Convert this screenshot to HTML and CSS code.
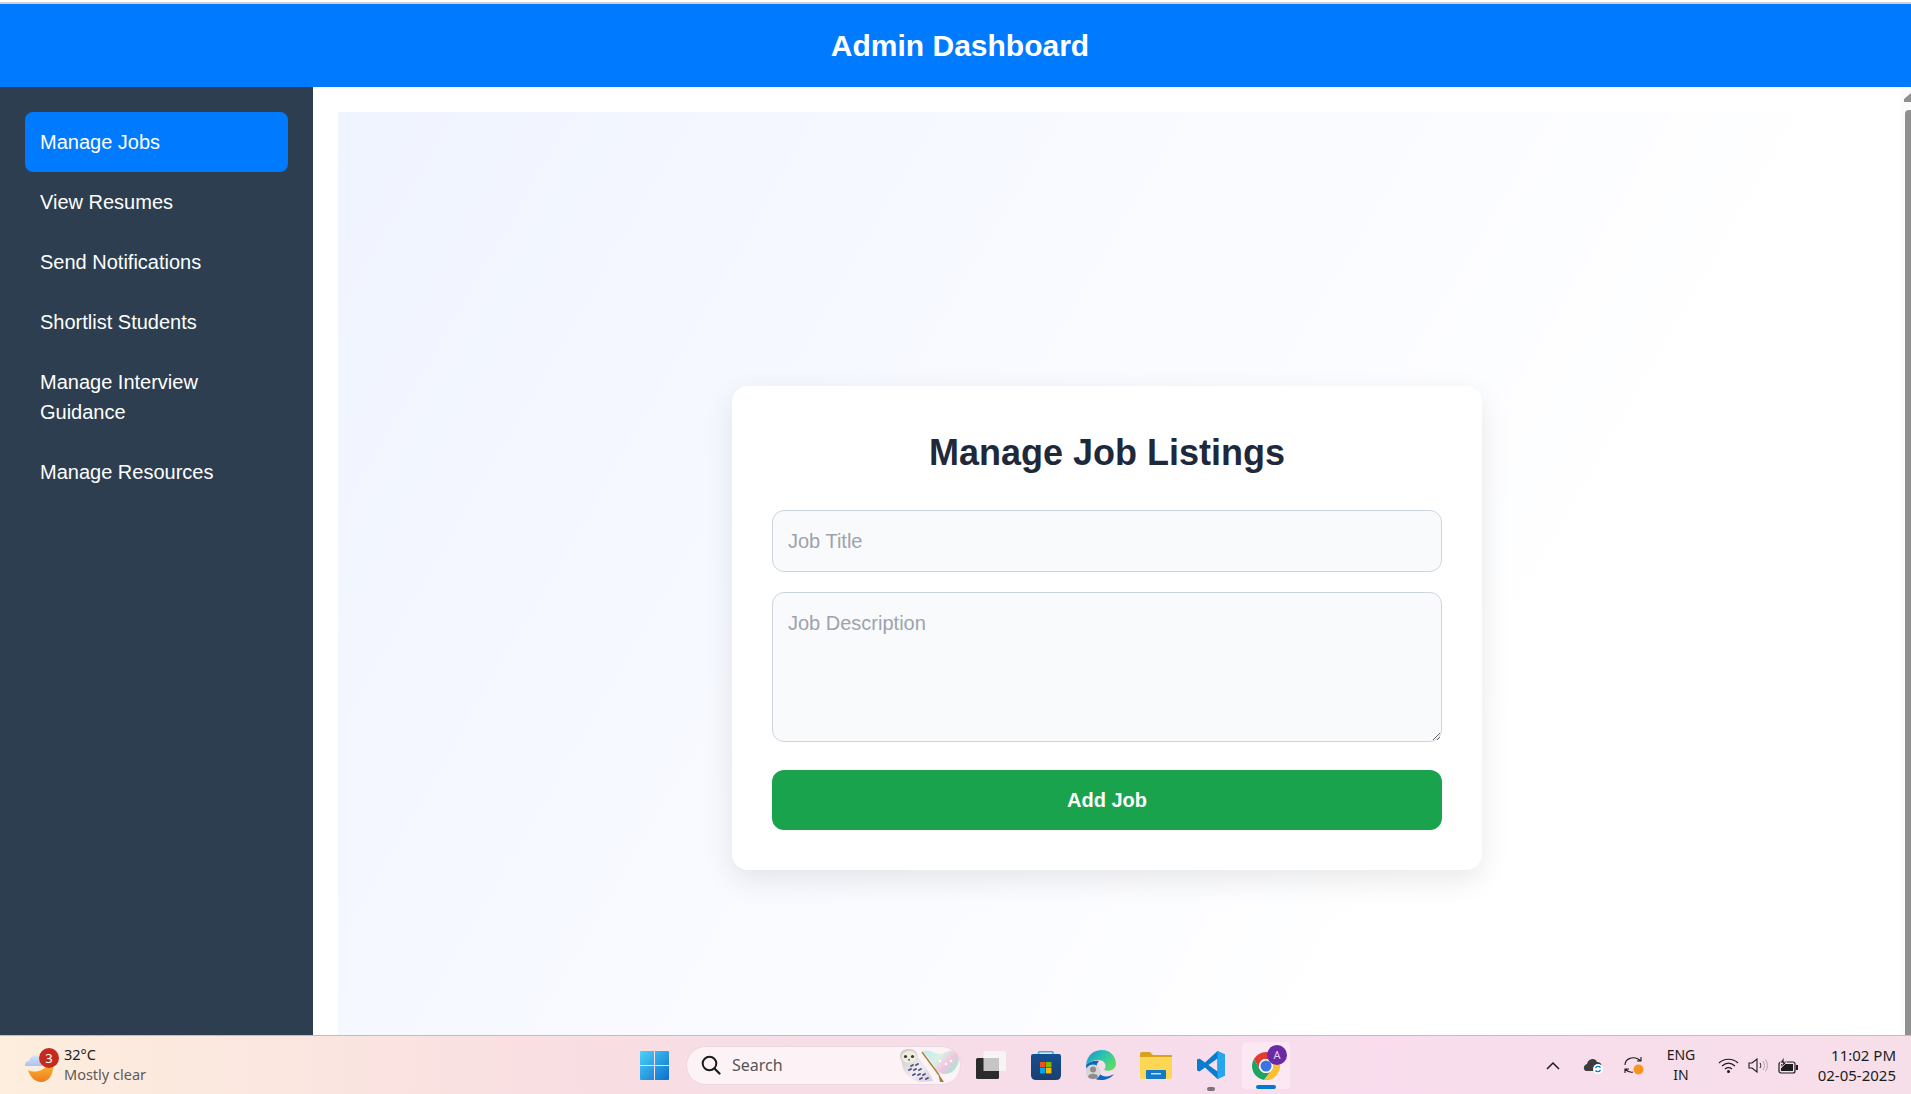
FILE: index.html
```html
<!DOCTYPE html>
<html lang="en">

<head>
    <meta charset="UTF-8">
    <meta name="viewport" content="width=device-width, initial-scale=1.0">
    <title>Admin Dashboard</title>
    <link rel="stylesheet" href="styles.css">
</head>

<body>
    <div class="screen">
        <div class="browser">
            <header class="topbar">
                <h1>Admin Dashboard</h1>
            </header>
            <div class="body-row">
                <nav class="sidebar">
                    <a href="#" class="nav-link active">Manage Jobs</a>
                    <a href="#" class="nav-link">View Resumes</a>
                    <a href="#" class="nav-link">Send Notifications</a>
                    <a href="#" class="nav-link">Shortlist Students</a>
                    <a href="#" class="nav-link">Manage Interview Guidance</a>
                    <a href="#" class="nav-link">Manage Resources</a>
                </nav>
                <main class="main">
                    <section class="panel">
                        <form class="card">
                            <h2>Manage Job Listings</h2>
                            <input class="field" type="text" placeholder="Job Title">
                            <textarea class="field area" placeholder="Job Description"></textarea>
                            <button class="add-btn" type="button">Add Job</button>
                        </form>
                    </section>
                </main>
                <div class="scrollbar">
                    <svg class="scroll-arrow" width="7" height="9" viewBox="0 0 7 9">
                        <path d="M0 9 L0 6 L7 0 L7 9 Z" fill="#8f8f8f" />
                    </svg>
                    <div class="scroll-thumb"></div>
                </div>
            </div>
        </div>

        <footer class="taskbar">
            <div class="tb-left">
                <div class="weather-icon">
                    <svg width="30" height="34" viewBox="0 0 30 34">
                        <defs>
                            <linearGradient id="moon" x1="0" y1="0" x2="0" y2="1">
                                <stop offset="0" stop-color="#f9b52f" />
                                <stop offset="1" stop-color="#ee7d1e" />
                            </linearGradient>
                            <linearGradient id="cloud" x1="0" y1="0" x2="0" y2="1">
                                <stop offset="0" stop-color="#d6e2f6" />
                                <stop offset="1" stop-color="#a9c3f0" />
                            </linearGradient>
                        </defs>
                        <path d="M3 22 C8 25 18 24 22 17 L28 16 C29 26 24 34 16 34 C10 34 5 29 3 22 Z" fill="url(#moon)" />
                        <path d="M0 18 C0 14 2 13 4 13 C5 7 13 5 15 10 C17 11 18 14 17 18 Z" fill="url(#cloud)" />
                    </svg>
                    <span class="weather-badge">3</span>
                </div>
                <div class="weather-text">
                    <span class="temp">32°C</span>
                    <span class="cond">Mostly clear</span>
                </div>
            </div>

            <div class="tb-center">
                <svg class="tb-win" width="29" height="29" viewBox="0 0 29 29">
                    <defs>
                        <linearGradient id="win" x1="0" y1="0" x2="1" y2="1">
                            <stop offset="0" stop-color="#4fd2f8" />
                            <stop offset="1" stop-color="#0a6fcf" />
                        </linearGradient>
                    </defs>
                    <path d="M1 0 H14 V14 H0 V1 Q0 0 1 0 Z M15 0 H28 Q29 0 29 1 V14 H15 Z M0 15 H14 V29 H1 Q0 29 0 28 Z M15 15 H29 V28 Q29 29 28 29 H15 Z" fill="url(#win)" />
                </svg>

                <div class="search">
                    <svg width="20" height="20" viewBox="0 0 20 20">
                        <circle cx="8.500" cy="8.500" r="6.800" fill="none" stroke="#1b1b1b" stroke-width="2" />
                        <path d="M13.500 13.500 L18.500 18.500" stroke="#1b1b1b" stroke-width="2.200" stroke-linecap="round" />
                    </svg>
                    <span class="search-label">Search</span>
                    <svg class="search-art" width="61" height="34" viewBox="0 0 61 34">
                        <defs>
                            <linearGradient id="feather" x1="0" y1="0" x2="1" y2="0.600">
                                <stop offset="0" stop-color="#bfeaf3" />
                                <stop offset="0.450" stop-color="#d8f1e6" />
                                <stop offset="0.750" stop-color="#f4c3df" />
                                <stop offset="1" stop-color="#a7e6d6" />
                            </linearGradient>
                            <linearGradient id="owl" x1="0" y1="0" x2="1" y2="1">
                                <stop offset="0" stop-color="#c9c6b6" />
                                <stop offset="0.600" stop-color="#efedf0" />
                                <stop offset="1" stop-color="#cfcbd8" />
                            </linearGradient>
                        </defs>
                        <path d="M24 3 C30 1 36 6 42 6 C46 5 50 1 55 3 C60 5 61 12 58 18 C55 24 50 26 46 26 C42 26 38 24 36 20 C33 14 28 8 24 3 Z" fill="url(#feather)" />
                        <circle cx="41" cy="13" r="1.300" fill="#fff" />
                        <circle cx="47" cy="16" r="1.300" fill="#fff" />
                        <circle cx="52" cy="13" r="1.300" fill="#fff" />
                        <path d="M23 4 L40 27" stroke="#a08236" stroke-width="1.400" />
                        <path d="M39 25 L45 34 L41 34 Z" fill="#a08236" />
                        <path d="M1 9 C1 3 5 1 10 1 C15 1 19 3 19 10 C25 15 31 25 34 33 L21 34 C10 31 3 23 3 15 Z" fill="url(#owl)" />
                        <ellipse cx="10" cy="9" rx="7.500" ry="6" fill="#efece2" />
                        <circle cx="6.500" cy="8.500" r="1.600" fill="#3a3a34" />
                        <circle cx="13.500" cy="8.500" r="1.600" fill="#3a3a34" />
                        <path d="M9 11 L11 11 L10 13.500 Z" fill="#55524a" />
                        <path d="M12 18 L14 17 M17 17 L19 16 M10 22 L12 21 M15 22 L17 21 M20 22 L22 21 M14 27 L16 26 M19 27 L21 26 M24 27 L26 26 M21 31 L23 30 M27 31 L29 30" stroke="#4e4a86" stroke-width="1.800" stroke-linecap="round" />
                    </svg>
                </div>

                <svg class="tb-icon" width="30" height="28" viewBox="0 0 30 28">
                    <rect x="7.500" y="0" width="22.500" height="20" rx="1.500" fill="#f7f4f5" />
                    <rect x="0" y="7" width="23" height="21" rx="1.500" fill="#2b2b2b" />
                    <rect x="7.500" y="7" width="15.500" height="13" fill="#c6c4c5" />
                </svg>

                <svg class="tb-icon" width="30" height="29" viewBox="0 0 30 29">
                    <defs>
                        <linearGradient id="store" x1="0" y1="0" x2="0" y2="1">
                            <stop offset="0" stop-color="#14508f" />
                            <stop offset="1" stop-color="#1b3f70" />
                        </linearGradient>
                    </defs>
                    <path d="M7.500 5 V1.500 Q7.500 0.800 8.500 0.800 H21 Q22 0.800 22 1.500 V5" fill="none" stroke="#28b4f0" stroke-width="1.600" />
                    <path d="M0 5 Q0 3 2 3 H28 Q30 3 30 5 V24 Q30 29 25 29 H5 Q0 29 0 24 Z" fill="url(#store)" />
                    <rect x="9" y="11" width="5.400" height="5.400" fill="#f25022" />
                    <rect x="15" y="11" width="5.400" height="5.400" fill="#7fba00" />
                    <rect x="9" y="17" width="5.400" height="5.400" fill="#00a4ef" />
                    <rect x="15" y="17" width="5.400" height="5.400" fill="#ffb900" />
                </svg>

                <svg class="tb-icon edge-icon" width="30" height="30" viewBox="0 0 30 30">
                    <defs>
                        <linearGradient id="edge" x1="0" y1="0" x2="1" y2="0.700">
                            <stop offset="0" stop-color="#1a8fd0" />
                            <stop offset="0.500" stop-color="#2cc3b0" />
                            <stop offset="1" stop-color="#5fdc64" />
                        </linearGradient>
                    </defs>
                    <path d="M0 15 C1 5 8 0 16 0 C24 0 30 6 30 14 C30 20 23 22 18 20 C22 15 18 10 12 10 C7 10 3 12 0 15 Z" fill="url(#edge)" />
                    <path d="M0 15 C3 12 8 10 13 11 C10 14 10 18 12 22 C15 27 22 28 28 24 C25 28 20 30 15 30 C6 30 0 23 0 15 Z" fill="#0f68c0" />
                    <circle cx="7" cy="22" r="7.500" fill="#d8d5d6" />
                    <circle cx="7" cy="19.500" r="3" fill="#8d8b8c" />
                    <path d="M2 27 C2 22.500 12 22.500 12 27 C10 29.500 4 29.500 2 27 Z" fill="#8d8b8c" />
                </svg>

                <svg class="tb-icon explorer-icon" width="32" height="27" viewBox="0 0 32 27">
                    <path d="M0 2 Q0 0 2 0 H10 L13 3 H32 V8 H0 Z" fill="#d9a21b" />
                    <path d="M0 5 H32 V25 Q32 27 30 27 H2 Q0 27 0 25 Z" fill="#fcd655" />
                    <rect x="6" y="18" width="20" height="9" rx="1" fill="#1579c9" />
                    <rect x="11" y="21" width="10" height="1.500" fill="#bfe0f7" />
                </svg>

                <svg class="tb-icon vscode-icon" width="30" height="30" viewBox="0 0 30 30">
                    <path fill-rule="evenodd" d="M21.500 1 L29 4.500 V25.500 L21.500 29 L9 17.500 L3.500 21.500 L1 20.500 V9.500 L3.500 8.500 L9 12.500 Z M21.500 8.500 L12.500 15 L21.500 21.500 Z" fill="#0b7ccb" />
                    <path d="M21.500 1 L29 4.500 V25.500 L21.500 29 Z" fill="#26a6ee" />
                </svg>

                <div class="chrome-tile">
                    <svg width="30" height="30" viewBox="0 0 30 30">
                        <path d="M2.900 8 A14 14 0 0 1 27.100 8 H15 A7 7 0 0 0 8.900 18.500 Z" fill="#e23c2e" />
                        <path d="M2.900 8 A14 14 0 0 0 13 28.900 L21.100 18.500 A7 7 0 0 1 8.900 18.500 Z" fill="#1ea362" />
                        <path d="M27.100 8 A14 14 0 0 1 13 28.900 L21.100 18.500 A7 7 0 0 0 15 8 Z" fill="#fbc02d" />
                        <circle cx="15" cy="15" r="7" fill="#f8f8f8" />
                        <circle cx="15" cy="15" r="5.500" fill="#3a74e0" />
                    </svg>
                    <span class="chrome-badge">A</span>
                    <span class="chrome-line"></span>
                </div>
                <span class="vscode-dot"></span>
            </div>

            <div class="tb-right">
                <svg class="tray-chev" width="14" height="9" viewBox="0 0 14 9">
                    <path d="M1 8 L7 2 L13 8" fill="none" stroke="#1c1c1c" stroke-width="1.500" />
                </svg>
                <svg class="tray-cloud" width="21" height="17" viewBox="0 0 21 17">
                    <path d="M3 14 C0 13 0 8 4 7 C5 2 12 0 14 5 C18 5 19 8 18 9 L10 14 Z" fill="#3d3d3d" />
                    <circle cx="15" cy="12" r="5" fill="#fff" />
                    <path d="M12.500 11 A3 3 0 0 1 17.500 10.500 M17.500 13 A3 3 0 0 1 12.500 13.500" fill="none" stroke="#0a78d7" stroke-width="1.400" />
                </svg>
                <svg class="tray-sync" width="21" height="19" viewBox="0 0 21 19">
                    <path d="M2 9 C2 3 9 0 15 3 L18 5 M18 1 V5 H14" fill="none" stroke="#1c1c1c" stroke-width="1.100" />
                    <path d="M10 16 C6 17 4 15 2 13 M2 17 V13 H6" fill="none" stroke="#1c1c1c" stroke-width="1.100" />
                    <circle cx="15.500" cy="13.500" r="5" fill="#f7931e" />
                </svg>
                <div class="tray-lang">
                    <span>ENG</span>
                    <span>IN</span>
                </div>
                <svg class="tray-wifi" width="21" height="15" viewBox="0 0 21 15">
                    <path d="M1 5 C6 0 15 0 20 5 M4 8 C8 4.500 13 4.500 17 8 M7 11 C9 9.500 12 9.500 14 11" fill="none" stroke="#1c1c1c" stroke-width="1.200" />
                    <circle cx="10.500" cy="13.500" r="1.500" fill="#1c1c1c" />
                </svg>
                <svg class="tray-vol" width="20" height="15" viewBox="0 0 20 15">
                    <path d="M1 5 H4 L9 1 V14 L4 10 H1 Z" fill="none" stroke="#1c1c1c" stroke-width="1.100" />
                    <path d="M12 5 C13 6.500 13 8.500 12 10" fill="none" stroke="#1c1c1c" stroke-width="1" />
                    <path d="M15 3 C17 6 17 9 15 12 M17.500 1.500 C20 5.500 20 9.500 17.500 13.500" fill="none" stroke="#b0a8ac" stroke-width="1" />
                </svg>
                <svg class="tray-batt" width="21" height="17" viewBox="0 0 21 17">
                    <rect x="1" y="5" width="16" height="11" rx="2" fill="none" stroke="#1c1c1c" stroke-width="1.200" />
                    <rect x="3" y="7" width="12" height="7" fill="#1c1c1c" />
                    <rect x="18" y="8" width="2" height="5" fill="#1c1c1c" />
                    <path d="M6 0 L2 6 H5 L3 11 L9 5 H6 Z" fill="#1c1c1c" stroke="#f6deea" stroke-width="0.800" />
                </svg>
                <div class="tray-clock">
                    <span>11:02 PM</span>
                    <span>02-05-2025</span>
                </div>
            </div>
        </footer>
    </div>
</body>

</html>
```

FILE: styles.css
```css
/**** DEFAULTS ****/

* {
    padding: 0;
    margin: 0;
    box-sizing: border-box;
}

html,
body {
    height: 100%;
    overflow: hidden;
}

body {
    font-family: "Liberation Sans", Arial, sans-serif;
    font-size: 20px;
    line-height: 1.5;
}

/**** PAGE ****/

.screen {
    display: flex;
    flex-direction: column;
    height: 1094px;
    background: #fff;
}

.browser {
    flex: 1;
    min-height: 0;
    display: flex;
    flex-direction: column;
    padding-top: 2px;
}

.topbar {
    height: 85px;
    flex-shrink: 0;
    padding-left: 9px;
    border-top: 2px solid #d0d0d0;
    background-color: #007bff;
    color: #fff;
    display: flex;
    align-items: center;
    justify-content: center;
}

.topbar h1 {
    font-size: 30px;
    font-weight: 700;
}

.body-row {
    flex: 1;
    min-height: 0;
    display: flex;
}

/**** SIDEBAR ****/

.sidebar {
    width: 313px;
    flex-shrink: 0;
    padding: 25px;
    background-color: #2c3e50;
}

.nav-link {
    display: block;
    padding: 15px;
    color: #fff;
    text-decoration: none;
    border-radius: 8px;
}

.nav-link.active {
    background-color: #007bff;
}

/**** MAIN ****/

.main {
    flex: 1;
    min-width: 0;
    padding: 25px 25px 0;
    overflow: hidden;
}

.panel {
    height: 1032px;
    display: flex;
    align-items: center;
    justify-content: center;
    background: linear-gradient(120deg, #f0f4ff, #ffffff 72%);
}

.card {
    width: 750px;
    padding: 40px;
    border-radius: 16px;
    background-color: #fff;
    box-shadow: 0 10px 30px rgba(0, 0, 0, 0.09);
}

.card h2 {
    margin-bottom: 30px;
    font-size: 36px;
    font-weight: 700;
    text-align: center;
    color: #1e293b;
}

.field {
    display: block;
    width: 100%;
    height: 62px;
    margin-bottom: 20px;
    padding: 15px;
    font-family: inherit;
    font-size: 20px;
    line-height: 1.5;
    color: #1e293b;
    background-color: #f9fafb;
    border: 1px solid #cbd5e1;
    border-radius: 12px;
}

.field::placeholder {
    color: #9ca3af;
}

.area {
    height: 150px;
    margin-bottom: 28px;
    resize: vertical;
}

.add-btn {
    display: block;
    width: 100%;
    height: 60px;
    font-family: inherit;
    font-size: 20px;
    font-weight: 700;
    color: #fff;
    background-color: #1aa34d;
    border: none;
    border-radius: 12px;
}

/**** SCROLLBAR ****/

.scrollbar {
    width: 10px;
    flex-shrink: 0;
    display: flex;
    flex-direction: column;
    align-items: flex-end;
    padding-top: 6px;
    background-color: #fbfbfb;
}

.scroll-arrow {
    display: block;
    margin-bottom: 8px;
}

.scroll-thumb {
    flex: 1;
    width: 6px;
    border-radius: 4px 0 0 0;
    background-color: #8f8f8f;
}

/**** TASKBAR ****/

.taskbar {
    height: 59px;
    flex-shrink: 0;
    display: flex;
    align-items: center;
    border-top: 1px solid #c9b8bd;
    background: linear-gradient(90deg, #fdeedd 0%, #f9dfe2 28%, #f6dde8 50%, #f9ddee 72%, #f7dfe9 100%);
    font-family: "Noto Sans", sans-serif;
    font-size: 14px;
    line-height: 20px;
    color: #1c1c1c;
}

.tb-left {
    width: 640px;
    flex-shrink: 0;
    display: flex;
    align-items: center;
    padding-left: 25px;
}

.weather-icon {
    position: relative;
    width: 30px;
    height: 34px;
    margin-right: 9px;
}

.weather-icon svg {
    display: block;
}

.weather-badge {
    position: absolute;
    top: 0;
    left: 14px;
    width: 20px;
    height: 20px;
    border-radius: 50%;
    background-color: #c42b1c;
    color: #fff;
    font-size: 13px;
    text-align: center;
}

.weather-text {
    display: flex;
    flex-direction: column;
    margin-top: -2px;
    font-size: 14.5px;
}

.cond {
    color: #5f5a58;
}

.tb-center {
    position: relative;
    width: 650px;
    flex-shrink: 0;
    display: flex;
    align-items: center;
}

.tb-win {
    display: block;
    margin-right: 17px;
}

.search {
    width: 275px;
    height: 39px;
    margin-right: 15px;
    padding-left: 14px;
    display: flex;
    align-items: center;
    border: 1px solid #ecd8e0;
    border-radius: 20px;
    background-color: #fdf2f6;
    font-size: 16px;
    color: #555;
}

.search-label {
    margin-left: 11px;
}

.search-art {
    margin-left: auto;
}

.tb-icon {
    display: block;
    margin-right: 25px;
}

.edge-icon,
.explorer-icon {
    margin-right: 24px;
}

.vscode-icon {
    margin-right: 16px;
}

.chrome-tile {
    position: relative;
    width: 48px;
    height: 47px;
    padding: 9px 0 0 9px;
    border-radius: 4px;
    background-color: #fbe8f2;
}

.chrome-tile svg {
    display: block;
}

.chrome-badge {
    position: absolute;
    top: 3px;
    left: 25px;
    width: 20px;
    height: 20px;
    border-radius: 50%;
    background-color: #6a2aa5;
    color: #e4cdf5;
    font-size: 11px;
    line-height: 20px;
    text-align: center;
}

.chrome-line {
    position: absolute;
    bottom: 0;
    left: 14px;
    width: 20px;
    height: 4px;
    border-radius: 2px;
    background-color: #0078d4;
}

.vscode-dot {
    position: absolute;
    left: 567px;
    bottom: -2px;
    width: 8px;
    height: 4px;
    border-radius: 2px;
    background-color: #7d7479;
}

.tb-right {
    flex: 1;
    display: flex;
    align-items: center;
    padding-left: 256px;
    padding-right: 15px;
}

.tray-chev {
    display: block;
    margin-right: 23px;
}

.tray-cloud {
    display: block;
    margin-right: 19px;
}

.tray-sync {
    display: block;
    margin-right: 23px;
}

.tray-lang {
    width: 28px;
    margin-right: 23px;
    display: flex;
    flex-direction: column;
    align-items: center;
}

.tray-wifi {
    display: block;
    margin-right: 9px;
}

.tray-vol {
    display: block;
    margin-right: 10px;
}

.tray-batt {
    display: block;
}

.tray-clock {
    margin-left: auto;
    display: flex;
    flex-direction: column;
    align-items: flex-end;
    font-size: 15px;
}
```
